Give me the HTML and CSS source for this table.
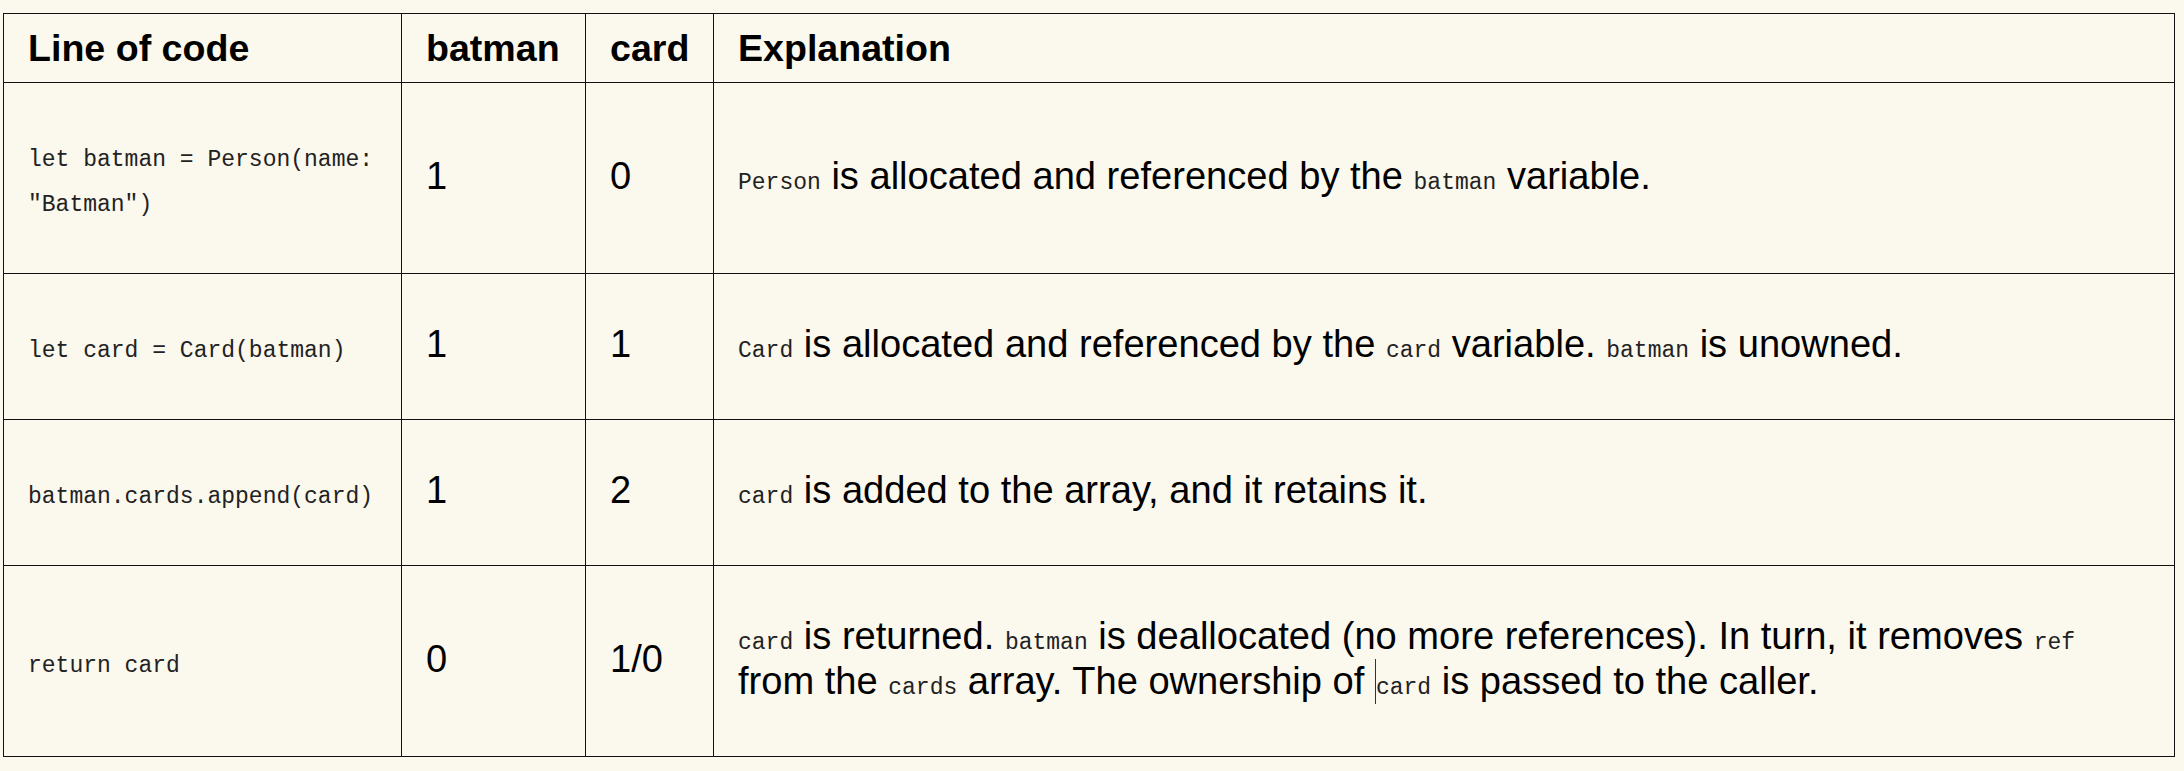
FILE: index.html
```html
<!DOCTYPE html>
<html lang="en">
<head>
<meta charset="utf-8">
<title>Reference counting table</title>
<link rel="stylesheet" href="styles.css">
</head>
<body>
<div class="page">
  <table class="rc-table">
    <colgroup>
      <col class="col-code">
      <col class="col-batman">
      <col class="col-card">
      <col class="col-expl">
    </colgroup>
    <thead>
      <tr>
        <th>Line of code</th>
        <th>batman</th>
        <th>card</th>
        <th>Explanation</th>
      </tr>
    </thead>
    <tbody>
      <tr>
        <td><code>let batman = Person(name: "Batman")</code></td>
        <td>1</td>
        <td>0</td>
        <td><code>Person</code> is allocated and referenced by the <code>batman</code> variable.</td>
      </tr>
      <tr>
        <td><code>let card = Card(batman)</code></td>
        <td>1</td>
        <td>1</td>
        <td><code>Card</code> is allocated and referenced by the <code>card</code> variable. <code>batman</code> is unowned.</td>
      </tr>
      <tr>
        <td><code>batman.cards.append(card)</code></td>
        <td>1</td>
        <td>2</td>
        <td><code>card</code> is added to the array, and it retains it.</td>
      </tr>
      <tr>
        <td><code>return card</code></td>
        <td>0</td>
        <td>1/0</td>
        <td><code>card</code> is returned. <code>batman</code> is deallocated (no more references). In turn, it removes <code>ref</code> from the <code>cards</code> array. The ownership of <span class="caret"></span><code>card</code> is passed to the caller.</td>
      </tr>
    </tbody>
  </table>
</div>
</body>
</html>
```

FILE: styles.css
```css
html, body {
  margin: 0;
  padding: 0;
  background: #fbf8ee;
}

.page {
  padding: 13px 9px 0 3px;
  font-family: "Liberation Sans", Arial, sans-serif;
  color: #000;
}

.rc-table {
  width: 2172px;
  border-collapse: collapse;
  table-layout: fixed;
  font-size: 38.1px;
  line-height: 45px;
}

.col-code { width: 398px; }
.col-batman { width: 184px; }
.col-card { width: 128px; }

.rc-table th,
.rc-table td {
  border: 1px solid #111;
  text-align: left;
  vertical-align: middle;
}

.rc-table th {
  font-size: 37.6px;
  font-weight: bold;
  padding: 12px 24px 11px 24px;
}

.rc-table td {
  padding: 48px 24px 52px 24px;
}

.rc-table code {
  font-family: "Liberation Mono", "Courier New", monospace;
  font-size: 23px;
  line-height: 1;
  color: #222;
}

.caret {
  display: inline-block;
  width: 1px;
  height: 45px;
  background: #333;
  vertical-align: top;
}
```
